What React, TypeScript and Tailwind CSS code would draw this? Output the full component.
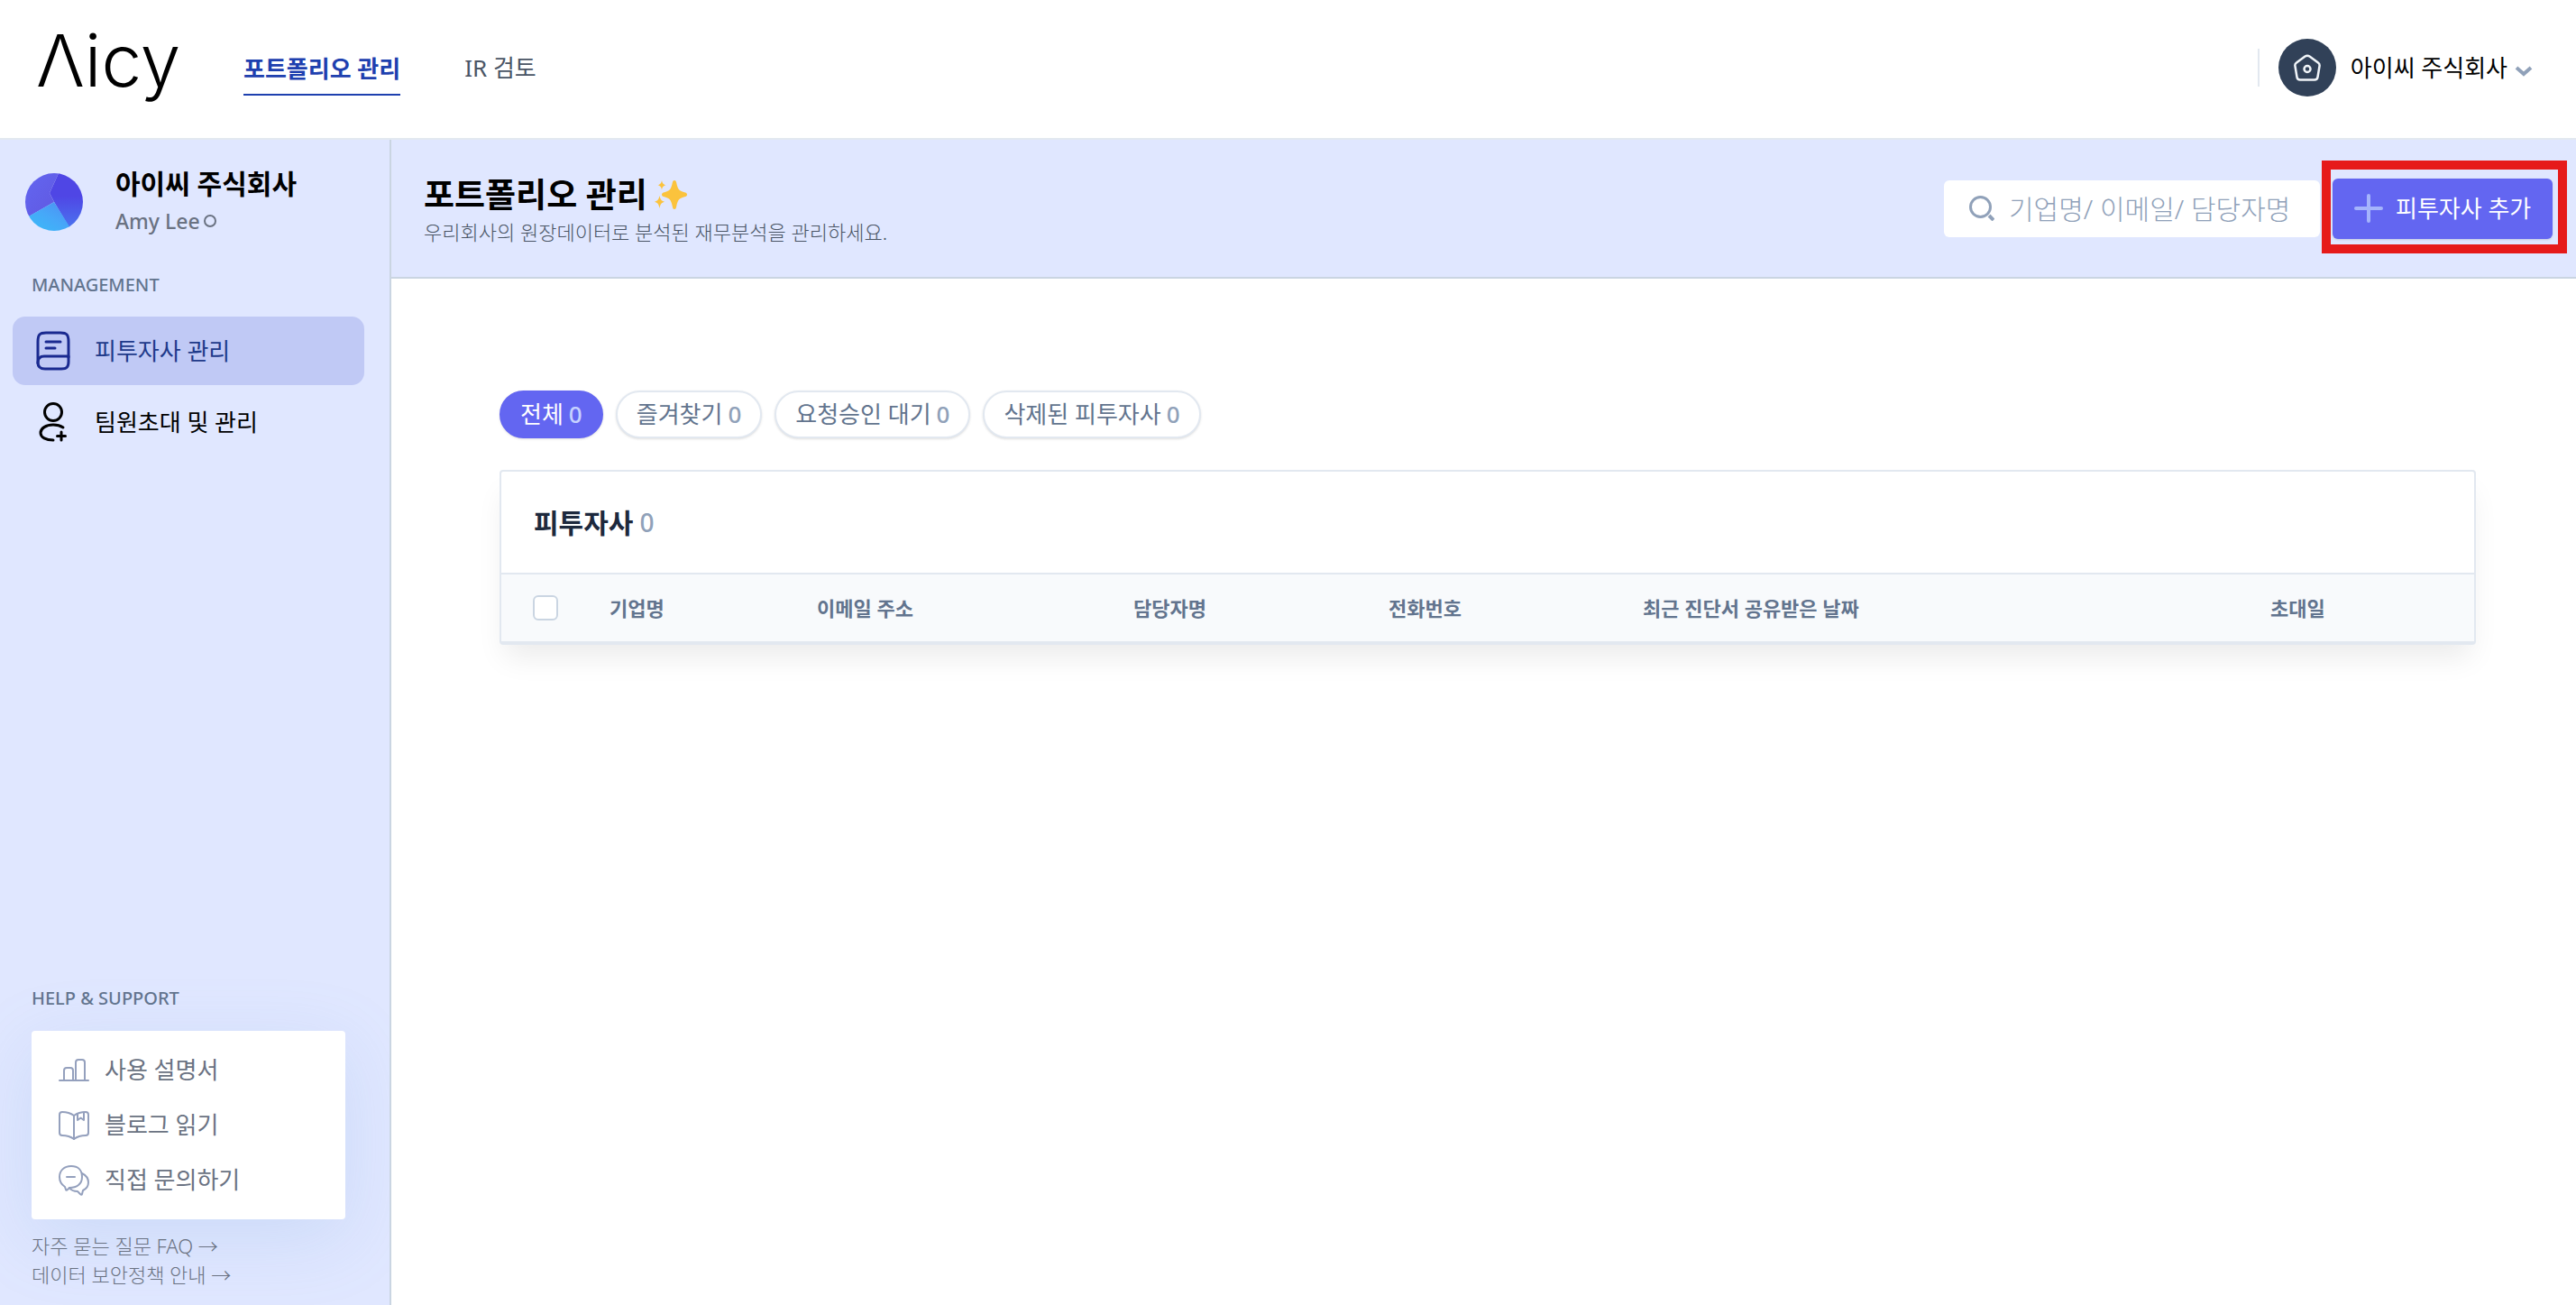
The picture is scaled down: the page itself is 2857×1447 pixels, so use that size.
import React from 'react';
import clsx from 'clsx';

interface IconProps {
  className?: string;
}

const BookIcon: React.FC<IconProps> = ({ className }) => (
  <svg className={className} viewBox="0 0 38 44" fill="none" stroke="currentColor" strokeWidth={3} strokeLinecap="round" strokeLinejoin="round">
    <path d="M2 36V12C2 4 4 2 11 2h16c7 0 9 2 9 10v17" />
    <path d="M9 28h27v6c0 6-2 8-8 8H10c-5 0-8-2-8-7s3-7 7-7z" />
    <path d="M11 12h16M11 19h10" />
  </svg>
);

const UserPlusIcon: React.FC<IconProps> = ({ className }) => (
  <svg className={className} viewBox="0 0 38 44" fill="none" stroke="currentColor" strokeWidth={3} strokeLinecap="round" strokeLinejoin="round">
    <circle cx="19" cy="11" r="9.5" />
    <path d="M30 28c-3-2-7-3-11-3-8 0-14 4-14 9s6 8 14 8" />
    <path d="M28 33v9M23.500 37.500h9" />
  </svg>
);

const ChartIcon: React.FC<IconProps> = ({ className }) => (
  <svg className={className} viewBox="0 0 34 34" fill="none" stroke="currentColor" strokeWidth={2} strokeLinecap="round" strokeLinejoin="round">
    <path d="M1 28h32" />
    <path d="M6 28V17c0-2 1-3 3-3h4c2 0 3 1 3 3v11" />
    <path d="M19 28V8c0-2 1-3 3-3h4c2 0 3 1 3 3v20" />
  </svg>
);

const OpenBookIcon: React.FC<IconProps> = ({ className }) => (
  <svg className={className} viewBox="0 0 34 34" fill="none" stroke="currentColor" strokeWidth={2} strokeLinecap="round" strokeLinejoin="round">
    <path d="M17 6C13 3 8 2 4 2 2 2 1 3 1 5v20c0 2 1 3 3 3 4 0 9 1 13 4 4-3 9-4 13-4 2 0 3-1 3-3V5c0-2-1-3-3-3-4 0-9 1-13 4z" />
    <path d="M17 6v26" />
    <path d="M21 4v7l3.500-2.500L28 11V2.500" />
  </svg>
);

const ChatIcon: React.FC<IconProps> = ({ className }) => (
  <svg className={className} viewBox="0 0 34 34" fill="none" stroke="currentColor" strokeWidth={2} strokeLinecap="round" strokeLinejoin="round">
    <path d="M14 1C6 1 1 6 1 13c0 5 3 9 6 11l1 3c0 1 1 1 2 0l2-2c8 0 14-4 14-12S21 1 14 1z" />
    <path d="M9 13h9" />
    <path d="M26 9c4 2 7 5 7 10 0 4-2 7-6 9l-1 4c0 1-1 1-2 0l-3-3c-4 0-7-1-9-4" />
  </svg>
);

const HomeIcon: React.FC<IconProps> = ({ className }) => (
  <svg className={className} viewBox="0 0 30 30" fill="none" stroke="currentColor" strokeWidth={2.500} strokeLinecap="round" strokeLinejoin="round">
    <path d="M12.500 2.500 3 9.500c-1.500 1-2 2-1.500 4l2 12c.3 2 1.500 3 3.500 3h16c2 0 3.200-1 3.500-3l2-12c.4-2 0-3-1.500-4l-9.500-7c-2-1.300-3-1.300-5 0z" />
    <circle cx="15" cy="16.500" r="3.500" />
  </svg>
);

const SparklesIcon: React.FC<IconProps> = ({ className }) => (
  <svg className={className} viewBox="0 0 36 32" fill="currentColor">
    <path d="M22 0c1.500 0 1.800 1 2.200 2.500 1.700 8 2.800 9 9.800 11 1.300.4 2 1.200 2 2.300 0 1.200-.7 1.900-2 2.300-7 2-8.100 3-9.800 11C23.800 31 23.500 32 22 32s-1.800-1-2.200-2.900c-1.700-8-2.800-9-9.800-11-1.300-.4-2-1.100-2-2.300 0-1.100.7-1.900 2-2.300 7-2 8.100-3 9.800-11C20.200 1 20.500 0 22 0z" />
    <path d="M8 0c.8 3.500 1.500 4.300 4.500 5.300C9.500 6.300 8.800 7 8 10.600 7.200 7 6.500 6.300 3.500 5.300 6.500 4.300 7.200 3.500 8 0z" />
    <path d="M5.500 17c1 4.500 1.900 5.600 5.500 6.700-3.600 1.200-4.500 2.300-5.500 7.300C4.500 26 3.600 24.900 0 23.700c3.600-1.100 4.500-2.200 5.500-6.700z" />
  </svg>
);

const CompanyAvatar: React.FC = () => (
  <svg className="size-16 shrink-0" viewBox="0 0 64 64">
    <defs>
      <clipPath id="avatar-clip">
        <circle cx="32" cy="32" r="32" />
      </clipPath>
      <linearGradient id="avatar-left" x1="0" y1="0" x2="1" y2="1">
        <stop offset="0" stopColor="#6366f1" />
        <stop offset="1" stopColor="#6058e0" />
      </linearGradient>
      <linearGradient id="avatar-right" x1="0" y1="0" x2="0" y2="1">
        <stop offset="0" stopColor="#4f46e5" />
        <stop offset="0.4" stopColor="#4f46e5" />
        <stop offset="1" stopColor="#4a78f0" />
      </linearGradient>
      <linearGradient id="avatar-bottom" x1="1" y1="0" x2="0" y2="1">
        <stop offset="0" stopColor="#4f8af2" />
        <stop offset="0.500" stopColor="#46a8f8" />
        <stop offset="1" stopColor="#38bdf8" />
      </linearGradient>
    </defs>
    <g clipPath="url(#avatar-clip)">
      <path d="M0 0h37L27 22l5 10L4 48H0z" fill="url(#avatar-left)" />
      <path d="M37 0h27v64H51L32 32l-5-10z" fill="url(#avatar-right)" />
      <path d="M0 50l32-18 20 32H0z" fill="url(#avatar-bottom)" />
    </g>
  </svg>
);

const menuItems = [
  { label: '피투자사 관리', icon: BookIcon, active: true },
  { label: '팀원초대 및 관리', icon: UserPlusIcon, active: false },
];

const helpItems = [
  { label: '사용 설명서', icon: ChartIcon },
  { label: '블로그 읽기', icon: OpenBookIcon },
  { label: '직접 문의하기', icon: ChatIcon },
];

const filters = [
  { label: '전체', count: 0, active: true },
  { label: '즐겨찾기', count: 0, active: false },
  { label: '요청승인 대기', count: 0, active: false },
  { label: '삭제된 피투자사', count: 0, active: false },
];

const columns = [
  { label: '기업명', width: 'w-[230px]' },
  { label: '이메일 주소', width: 'w-[351px]' },
  { label: '담당자명', width: 'w-[283px]' },
  { label: '전화번호', width: 'w-[282px]' },
  { label: '최근 진단서 공유받은 날짜', width: 'w-[696px]' },
  { label: '초대일', width: 'w-[226px]' },
];

const TopBar: React.FC = () => (
  <header className="flex h-[155px] shrink-0 items-center border-b-2 border-slate-200 bg-white pr-12 pb-1 pl-10">
    <a href="#" className="w-[160px] pb-4 font-['Inter',sans-serif] text-[80px] leading-[80px] font-light text-black">
      Λicy
    </a>
    <nav className="ml-[70px] flex items-center gap-[71px] text-[26px] leading-10">
      <a href="#" className="border-b-2 border-[#1e40af] pt-3 pb-2 font-bold text-[#1e40af]">포트폴리오 관리</a>
      <a href="#" className="text-gray-600">IR 검토</a>
    </nav>
    <div className="ml-auto flex items-center">
      <div className="h-[42px] w-0.5 bg-slate-200" />
      <button type="button" className="ml-[21px] flex items-center text-[26px] leading-10 text-black">
        <span className="mr-4 flex size-16 items-center justify-center rounded-full bg-slate-700 text-slate-100">
          <HomeIcon className="size-[30px]" />
        </span>
        아이씨 주식회사
        <svg className="mt-2 ml-2 h-3 w-5 text-slate-400" viewBox="0 0 20 12" fill="none" stroke="currentColor" strokeWidth={4}>
          <path d="M2 2l8 7 8-7" />
        </svg>
      </button>
    </div>
  </header>
);

const Sidebar: React.FC = () => (
  <aside className="flex w-[434px] shrink-0 flex-col overflow-hidden border-r-2 border-slate-300 bg-indigo-100">
    <div className="flex items-center gap-9 px-7 pt-7">
      <CompanyAvatar />
      <div>
        <p className="text-[30px] leading-[42px] font-bold text-black">아이씨 주식회사</p>
        <p className="flex items-center gap-1 text-[23px] leading-10 font-medium text-gray-500">
          Amy Lee
          <span className="size-[14px] rounded-full border-2 border-gray-500" />
        </p>
      </div>
    </div>

    <h2 className="mt-[35px] px-[35px] text-[20px] leading-8 font-medium text-slate-500">MANAGEMENT</h2>
    <nav className="mt-[19px] flex flex-col gap-[3px] pr-7 pl-[14px]">
      {menuItems.map(({ label, icon: Icon, active }) => (
        <a
          key={label}
          href="#"
          className={clsx(
            'flex h-[76px] items-center gap-[27px] rounded-[14px] pl-[26px] text-[26px]',
            active ? 'bg-[#c0c9f5] text-[#1e3a8a]' : 'text-black'
          )}
        >
          <Icon className={clsx('h-11 w-[38px]', active && 'text-[#1a2a90]')} />
          {label}
        </a>
      ))}
    </nav>

    {/* Help */}
    <div className="mt-auto pt-10 pr-[49px] pb-[18px] pl-[35px]">
      <h2 className="text-[20px] leading-8 font-medium text-slate-500">HELP &amp; SUPPORT</h2>
      <ul className="mt-5 flex flex-col rounded bg-white px-[30px] py-[13px] shadow-[0_20px_80px_rgba(110,160,215,0.18)]">
        {helpItems.map(({ label, icon: Icon }) => (
          <li key={label}>
            <a href="#" className="flex h-[61px] items-center gap-[17px] text-[26px] text-gray-500">
              <Icon className="size-[34px] text-[#94a0bd]" />
              {label}
            </a>
          </li>
        ))}
      </ul>
      <div className="mt-[13px] flex flex-col text-[22px] leading-8 font-light text-gray-500">
        <a href="#">자주 묻는 질문 FAQ →</a>
        <a href="#">데이터 보안정책 안내 →</a>
      </div>
    </div>
  </aside>
);

const PageHeader: React.FC = () => (
  <div className="flex h-[154px] items-center justify-between border-b-2 border-slate-300 bg-indigo-100 pr-[26px] pl-9">
    <div className="pt-1">
      <h1 className="flex items-center gap-2 text-[37px] leading-[48px] font-bold text-black">
        포트폴리오 관리
        <SparklesIcon className="h-8 w-9 text-[#fbc33d]" />
      </h1>
      <p className="text-[22px] leading-[34px] font-light text-gray-600">우리회사의 원장데이터로 분석된 재무분석을 관리하세요.</p>
    </div>
    <div className="flex items-center gap-[14px]">
      <div className="flex h-[63px] w-[417px] items-center gap-4 rounded-md bg-white pl-7">
        <svg className="size-7 shrink-0 text-slate-400" viewBox="0 0 28 28" fill="none" stroke="currentColor" strokeWidth={3}>
          <circle cx="12.500" cy="12.500" r="11" />
          <path d="M22 22l5 5" strokeWidth={4} />
        </svg>
        <input
          type="text"
          aria-label="검색"
          placeholder="기업명/ 이메일/ 담당자명"
          className="w-full min-w-0 bg-transparent text-[30px] font-light outline-none placeholder:text-slate-400"
        />
      </div>
      <div className="relative">
        <button type="button" className="flex h-[67px] w-[244px] items-center gap-[14px] rounded-md bg-[#6366f1] pl-6 text-[26px] text-white shadow-sm">
          <svg className="size-8 text-[#a5b4fc]" viewBox="0 0 32 32" fill="none" stroke="currentColor" strokeWidth={4} strokeLinecap="round">
            <path d="M16 2v28M2 16h28" />
          </svg>
          피투자사 추가
        </button>
        <div className="pointer-events-none absolute -top-5 -right-4 -bottom-4 -left-3 border-[10px] border-[#e61a1a]" />
      </div>
    </div>
  </div>
);

export default function App() {
  return (
    <div className="flex min-h-screen flex-col bg-white font-['Noto_Sans','Noto_Sans_CJK_KR',sans-serif]">
      <TopBar />
      <div className="flex flex-1">
        <Sidebar />
        <main className="min-w-0 flex-1">
          <PageHeader />
          <div className="pt-[124px] pr-[111px] pl-[120px]">
            <div className="flex gap-[14px]">
              {filters.map(({ label, count, active }) => (
                <button
                  key={label}
                  type="button"
                  className={clsx(
                    'flex h-[53px] items-center gap-1.5 rounded-full border-2 px-[21px] text-[26px] shadow-sm',
                    active ? 'border-[#6366f1] bg-[#6366f1] text-white' : 'border-slate-200 bg-white text-slate-500'
                  )}
                >
                  {label}
                  <span className={clsx('font-medium', active ? 'text-indigo-200' : 'text-slate-400')}>{count}</span>
                </button>
              ))}
            </div>

            <section className="mt-[35px] rounded border-2 border-slate-200 bg-white shadow-[0_20px_30px_-6px_rgba(0,0,0,0.08)]">
              <h2 className="flex h-28 items-center gap-[7px] px-9 text-[30px] font-bold text-slate-800">
                피투자사
                <span className="text-[28px] font-medium text-slate-400">0</span>
              </h2>
              <table className="w-full table-fixed">
                <thead>
                  <tr className="h-[76px] border-y-2 border-slate-200 bg-slate-50 text-left text-[22px] text-slate-500">
                    <th className="w-[120px] pl-[35px]">
                      <input
                        type="checkbox"
                        aria-label="전체 선택"
                        className="block size-7 appearance-none rounded-md border-2 border-slate-300 bg-white"
                      />
                    </th>
                    {columns.map(({ label, width }) => (
                      <th key={label} className={clsx('font-semibold', width)}>{label}</th>
                    ))}
                  </tr>
                </thead>
              </table>
            </section>
          </div>
        </main>
      </div>
    </div>
  );
}
